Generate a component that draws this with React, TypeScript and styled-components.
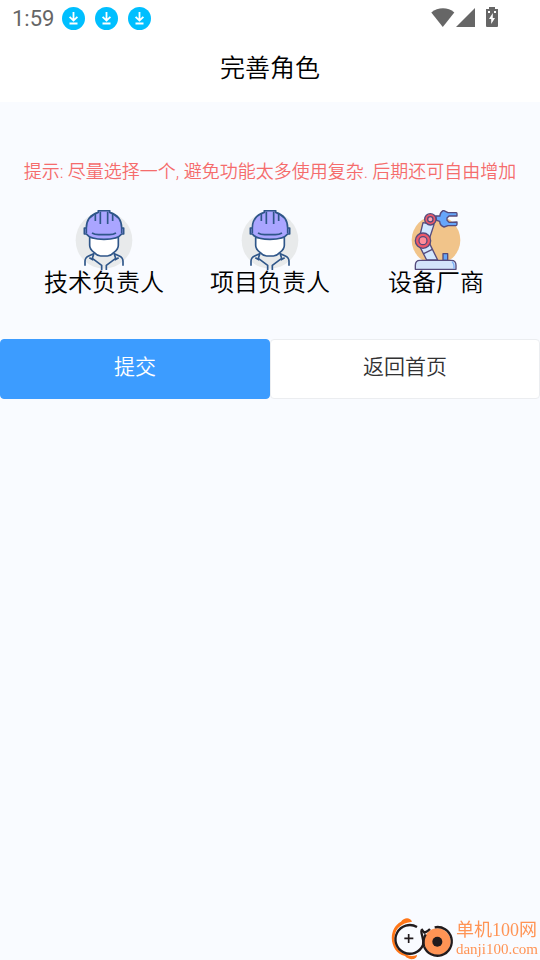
import React from "react";
import styled, { createGlobalStyle } from "styled-components";

const Global = createGlobalStyle`
  *, *::before, *::after { box-sizing: border-box; }
  body {
    margin: 0;
    background: #f9fbff;
    color: #000;
    font-family: Roboto, "Noto Sans CJK SC", sans-serif;
    font-weight: 350;
  }
  button { font-family: inherit; font-weight: inherit; cursor: pointer; }
`;

const Page = styled.div`
  min-height: 100vh;
  display: flex;
  flex-direction: column;
`;

const StatusBar = styled.div`
  display: flex;
  align-items: center;
  justify-content: space-between;
  height: 36px;
  padding: 0 42px 0 12px;
  background: #fff;
`;

const StatusGroup = styled.div<{ $gap: number }>`
  display: flex;
  align-items: center;
  gap: ${(p) => p.$gap}px;
`;

const Clock = styled.span`
  padding-top: 2px;
  font-size: 22px;
  font-weight: 400;
  line-height: 34px;
  color: #666;
`;

const Header = styled.header`
  display: flex;
  justify-content: center;
  padding: 14px 16px;
  background: #fff;
`;

const Title = styled.h1`
  margin: 0;
  font-size: 25px;
  line-height: 38px;
  font-weight: 350;
`;

const Main = styled.main`
  padding-top: 56px;
`;

const Hint = styled.p`
  margin: 0;
  text-align: center;
  font-size: 18px;
  line-height: 28px;
  color: #f56c6c;
`;

const Roles = styled.div`
  display: grid;
  grid-template-columns: repeat(3, 1fr);
  padding: 24px 21px 0;
`;

const Role = styled.button`
  display: flex;
  flex-direction: column;
  align-items: center;
  padding: 0;
  border: 0;
  background: none;
  color: #000;
  font-size: 24px;
  line-height: 26px;
`;

const Actions = styled.div`
  display: grid;
  grid-template-columns: 1fr 1fr;
  margin-top: 43px;
`;

const Action = styled.button<{ $primary?: boolean }>`
  height: 60px;
  padding: 0 0 4px;
  border: 1px solid ${(p) => (p.$primary ? "#3c9cff" : "#ebedf0")};
  border-radius: 4px;
  background: ${(p) => (p.$primary ? "#3c9cff" : "#fff")};
  color: ${(p) => (p.$primary ? "#fff" : "#323233")};
  font-size: 21px;
  line-height: 30px;
`;

const SiteMark = styled.a`
  position: fixed;
  right: 2px;
  bottom: 0;
  display: flex;
  align-items: center;
  gap: 1px;
  color: #ff9455;
  font-weight: 400;
  text-decoration: none;
`;

const SiteText = styled.span`
  display: flex;
  flex-direction: column;
  font-family: "Liberation Serif", "Noto Sans CJK SC", serif;
`;

const SiteName = styled.span`
  font-size: 18px;
  line-height: 20px;
`;

const SiteDomain = styled.span`
  font-size: 15px;
  line-height: 18px;
`;

const DownloadIcon = () => (
  <svg width="23" height="23" viewBox="0 0 23 23" aria-hidden="true">
    <circle cx="11.5" cy="11.5" r="11.5" fill="#00bfff" />
    <path d="M11.5 5v8.2M7.6 9.8l3.9 3.8 3.9-3.8M7.5 16.5h8" fill="none" stroke="#fff" strokeWidth="1.8" />
  </svg>
);

const WifiIcon = () => (
  <svg width="24" height="22" viewBox="0 0 24 22" aria-hidden="true">
    <path d="M.3 5.4C7-.2 17-.2 23.3 5.4L11.8 20z" fill="#666" />
  </svg>
);

const SignalIcon = () => (
  <svg width="19" height="22" viewBox="0 0 19 22" aria-hidden="true">
    <path d="M0 20L19 1v19z" fill="#666" />
  </svg>
);

const BatteryIcon = () => (
  <svg width="12" height="22" viewBox="0 0 12 22" aria-hidden="true">
    <path d="M3 0h6v2h3v17q0 1-1 1H1q-1 0-1-1V2h3z" fill="#666" />
    <path d="M2 4h2v2H2zM8 4h2v2H8zM6.8 6v5H9l-3.8 6v-5H3z" fill="#fff" />
  </svg>
);

const WorkerIcon = () => (
  <svg width="60" height="60" viewBox="42 30 180 180" aria-hidden="true">
    <circle cx="132" cy="121" r="85" fill="#e8eaeb" />
    <g stroke="#2f5689" strokeWidth="5" strokeLinejoin="round">
      <path d="M89 112v24q0 12 13 21 9 11 20 11h20q11 0 20-11 13-9 13-21v-24z" fill="#fff" />
      <path d="M102 160l-5 15 28 21v14M162 160l5 15-28 21v14M101 161l-15 7q-11 5-11 16v13M163 161l15 7q11 5 11 16v13M88 173l12 7M176 173l-12 7" fill="none" />
      <path d="M79 84c0-23 13-40 36-47V32h34v5c23 7 36 24 36 47h6v18h-6c-8 11-28 16-53 16s-45-5-53-16h-6V84z" fill="#aaa5ff" />
      <path d="M121 35v37M143 35v37M106 42v21M158 42v21M79 84v16M185 84v16M96 99q8 5 20 5h32q12 0 20-5" fill="none" />
    </g>
  </svg>
);

const RobotArmIcon = () => (
  <svg width="60" height="60" viewBox="48 30 180 180" aria-hidden="true">
    <circle cx="138" cy="120" r="73" fill="#f1c48a" />
    <g stroke="#554b7c" strokeWidth="4" strokeLinejoin="round" strokeLinecap="round">
      <path d="M99 68l-11 46 27 12 17-52z" fill="#d3e8ff" />
      <path d="M88 137l22 43h33l-26-53z" fill="#d3e8ff" />
      <path d="M101 161l26-13" fill="none" />
      <path d="M137 48h13q-1-10 10-17l14 7h25q2 0 2 3v7h-24l-6 6v7l6 6 24-1v7q0 3-3 4h-24l-12 4q-12-4-13-17l-9-3z" fill="#66a6fa" />
      <circle cx="121" cy="58" r="17" fill="#ee5969" />
      <circle cx="121" cy="58" r="8" fill="#ffa2b0" />
      <circle cx="99" cy="122" r="23" fill="#ee5969" />
      <circle cx="99" cy="122" r="12" fill="#ff8f9b" />
      <path d="M159 181v-20h14v20z" fill="#66a6fa" />
      <path d="M76 208v-12q0-15 14-15h94q14 0 14 15v12z" fill="#d3e4fa" />
      <path d="M187 186q5 4 5 12v7" fill="none" stroke="#78aef5" />
    </g>
  </svg>
);

const SiteLogo = () => (
  <svg width="65" height="43" viewBox="32 36 195 129" aria-hidden="true">
    <path d="M98 50c-4-14-25-14-33 0-40 20-37 91 12 103 12 14 36 12 36-3-14 5-24 3-33-2-42-12-46-71-11-89 9-7 20-7 29-9z" fill="#ff7618" />
    <circle cx="174" cy="110" r="40" fill="#ff9455" />
    <g fill="none" stroke="#211b1d" strokeWidth="7">
      <path d="M113 66a43 43 0 1 0 18 54c5-18-6-27-5-44" />
      <path d="M126 72q7 10 10 11 8-3 16-11M166 67a43 43 0 1 1-32 57q-5-18 5-36" />
      <path d="M88 87v27M75 100h27" strokeWidth="5" />
    </g>
    <circle cx="174" cy="110" r="15" fill="#211b1d" />
  </svg>
);

const roles = [
  { label: "技术负责人", Icon: WorkerIcon },
  { label: "项目负责人", Icon: WorkerIcon },
  { label: "设备厂商", Icon: RobotArmIcon },
];

export default function App() {
  return (
    <Page>
      <Global />
      <StatusBar>
        <StatusGroup $gap={8}>
          <Clock>1:59</Clock>
          <StatusGroup $gap={10}>
            <DownloadIcon />
            <DownloadIcon />
            <DownloadIcon />
          </StatusGroup>
        </StatusGroup>
        <StatusGroup $gap={11}>
          <StatusGroup $gap={1}>
            <WifiIcon />
            <SignalIcon />
          </StatusGroup>
          <BatteryIcon />
        </StatusGroup>
      </StatusBar>
      <Header>
        <Title>完善角色</Title>
      </Header>
      <Main>
        <Hint>提示: 尽量选择一个, 避免功能太多使用复杂. 后期还可自由增加</Hint>
        <Roles>
          {roles.map(({ label, Icon }) => (
            <Role key={label} type="button">
              <Icon />
              <span>{label}</span>
            </Role>
          ))}
        </Roles>
        <Actions>
          <Action type="button" $primary>提交</Action>
          <Action type="button">返回首页</Action>
        </Actions>
      </Main>
      <SiteMark href="#">
        <SiteLogo />
        <SiteText>
          <SiteName>单机100网</SiteName>
          <SiteDomain>danji100.com</SiteDomain>
        </SiteText>
      </SiteMark>
    </Page>
  );
}
